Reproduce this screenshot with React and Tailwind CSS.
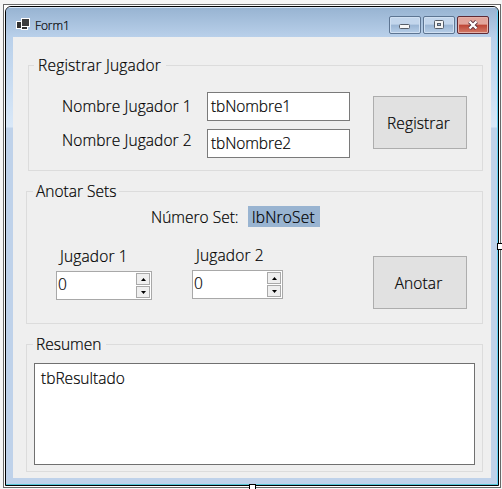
import React from 'react';

const font = "font-['Open_Sans','Noto_Sans',sans-serif]";

function Group({ title, className, titleClass, children }) {
  return (
    <section className={`border border-[#dcdcdc] ${className}`}>
      <h2 className={`-mt-[12px] flex h-[22px] w-max items-center whitespace-nowrap bg-[#efefef] pt-[2px] font-light ${titleClass}`}>{title}</h2>
      {children}
    </section>
  );
}

function Spinner({ className }) {
  return (
    <div className={`flex justify-between border border-[#a8a8a8] bg-white ${className}`}>
      <span className="ml-[1px] mt-[1px] leading-[22px]">0</span>
      <div className="mr-[1px] mt-[1px] flex h-[25px] w-[14px] flex-col gap-px">
        <div className="flex h-3 items-center justify-center border border-[#a9a9a9] bg-[#efefef]">
          <svg width="5" height="3" viewBox="0 0 5 3"><path d="M0 3L2.5 0L5 3Z" fill="#000" /></svg>
        </div>
        <div className="flex h-3 items-center justify-center border border-[#a9a9a9] bg-[#efefef]">
          <svg width="5" height="3" viewBox="0 0 5 3"><path d="M0 0L2.5 3L5 0Z" fill="#000" /></svg>
        </div>
      </div>
    </div>
  );
}

function Caption({ close, children }) {
  return (
    <div
      className={`flex h-[18px] w-8 items-center justify-center rounded-[2px] border ${
        close
          ? 'border-[#5f2a35] bg-linear-to-b from-[#e2a59c] from-45% via-[#bd4435] via-50% to-[#d27a68] shadow-[inset_0_0_0_1px_#e6b1a8]'
          : 'border-[#5d7592] bg-linear-to-b from-[#c3d6ec] from-45% via-[#9ab5d4] via-50% to-[#b6cee8] shadow-[inset_0_0_0_1px_#d0e0f2]'
      }`}
    >
      {children}
    </div>
  );
}

function TitleBar() {
  return (
    <header className="flex h-[29px] bg-linear-to-b from-[#98b4d2] to-[#b9d0ea]">
      <svg className="ml-[10px] mt-[9px]" width="15" height="14" viewBox="0 0 15 14">
        <rect x=".5" y="4.5" width="7" height="7" fill="#333" stroke="#fff" />
        <rect x="5.5" y="8.5" width="6" height="4" fill="#333" stroke="#fff" />
        <rect x="5.5" y="1.5" width="8" height="8" fill="#3c3c3c" stroke="#fff" />
      </svg>
      <span className="ml-[4px] mt-[9px] text-[12px] leading-[18px] tracking-[-0.1px]">Form1</span>
      <div className="ml-auto mr-[8px] mt-[8px] flex gap-0.5">
        <Caption>
          <svg className="mt-[3px]" width="12" height="6" viewBox="0 0 12 6"><rect x=".5" y=".5" width="10" height="4" rx="1" fill="#f6f6f6" stroke="#555d68" /></svg>
        </Caption>
        <Caption>
          <svg width="12" height="10" viewBox="0 0 12 10"><rect x="1.5" y=".5" width="9" height="8" rx="1" fill="#f4f4f4" stroke="#555d68" /><rect x="4.5" y="3.5" width="3" height="2" fill="#9ab5d4" stroke="#555d68" /></svg>
        </Caption>
        <Caption close>
          <svg width="12" height="10" viewBox="0 0 12 10"><path d="M2.5 1.5L9.5 8.5M9.5 1.5L2.5 8.5" stroke="#5b3440" strokeWidth="4" /><path d="M2.5 1.5L9.5 8.5M9.5 1.5L2.5 8.5" stroke="#fff" strokeWidth="2.4" /></svg>
        </Caption>
      </div>
    </header>
  );
}

function PushButton({ children, className }) {
  return <button className={`flex h-[53px] w-[94px] items-center justify-center border border-[#adadad] bg-[#e1e1e1] pr-[3px] pt-[2px] font-light tracking-[0.1px] ${className}`}>{children}</button>;
}

export default function App() {
  return (
    <div className={`relative h-[489px] w-[502px] overflow-hidden bg-[#f5f5f5] pl-[3px] pt-1 text-[15.5px] font-light text-black [-webkit-text-stroke:0.2px_#000] ${font}`}>
      <div className="h-[484px] w-[498px] border border-[#686868] bg-white pl-px pt-px">
        <div className="h-[480px] w-[494px] overflow-hidden rounded-t-[6px] border border-black bg-[#bfd2ea]">
          <div className="h-[478px] border-b border-r border-t border-b-[#55c5d5] border-r-[#62d2f5] border-t-[#d7e5f5]">
            <TitleBar />
            <div className="flex h-[447px] bg-linear-to-b from-[#b9d0ea] via-[#d9e8f8] via-[90px] to-[#bfd2ea] to-[91px]">
              <main className="ml-[7px] h-[441px] w-[478px] bg-[#efefef] pl-[13px] pt-[28px]">
                <Group title="Registrar Jugador" className="ml-[2px] h-[106px] w-[455px]" titleClass="ml-[5px] pl-[4px] pr-[5px] tracking-[0.2px]">
                  <div className="flex">
                    <div className="ml-[33px] mt-[19px] w-[145px] whitespace-nowrap leading-[22px] tracking-[0.1px]">
                      <div>Nombre Jugador 1</div>
                      <div className="mt-[12px]">Nombre Jugador 2</div>
                    </div>
                    <div className="mt-[16px] flex w-[143px] flex-col gap-2">
                      <div className="h-[29px] border border-[#7a7a7a] bg-white pl-[3px] leading-[27px] tracking-[-0.1px]">tbNombre1</div>
                      <div className="h-[29px] border border-[#7a7a7a] bg-white pl-[3px] leading-[27px] tracking-[-0.1px]">tbNombre2</div>
                    </div>
                    <PushButton className="ml-[23px] mt-[20px]">Registrar</PushButton>
                  </div>
                </Group>
                <Group title="Anotar Sets" className="mt-[20px] h-[133px] w-[457px]" titleClass="ml-[6px] pl-[3px] pr-[3px]">
                  <div className="mt-[4px] flex h-[21px] leading-[22px]">
                    <span className="ml-[124px] w-[97px] whitespace-nowrap">Número Set:</span>
                    <span className="w-[72px] bg-[#99b4d1] pl-[4px] tracking-[0.2px]">lbNroSet</span>
                  </div>
                  <div className="flex">
                    <div className="ml-[29px] mt-[18px] w-[96px]">
                      <div className="pl-[4px] leading-[22px] tracking-[0.15px]">Jugador 1</div>
                      <Spinner className="mt-[4px] h-[29px] w-[96px]" />
                    </div>
                    <div className="ml-[40px] mt-[17px] w-[91px]">
                      <div className="pl-[4px] leading-[22px] tracking-[0.15px]">Jugador 2</div>
                      <Spinner className="mt-[4px] h-[29px] w-[91px]" />
                    </div>
                    <PushButton className="ml-[90px] mt-[29px]">Anotar</PushButton>
                  </div>
                </Group>
                <Group title="Resumen" className="mt-[20px] h-[128px] w-[457px]" titleClass="ml-[6px] pl-[3px] pr-[5px]">
                  <div className="ml-[7px] mt-[8px] h-[102px] w-[441px] border border-[#707070] bg-white pl-[6px] pt-[3px] leading-[22px]">tbResultado</div>
                </Group>
              </main>
            </div>
          </div>
        </div>
      </div>
      <div className="absolute left-[497px] top-[243px] h-[7px] w-[7px] border border-black bg-white" />
      <div className="absolute left-[249px] top-[484px] h-[7px] w-[7px] border border-black bg-white" />
    </div>
  );
}
